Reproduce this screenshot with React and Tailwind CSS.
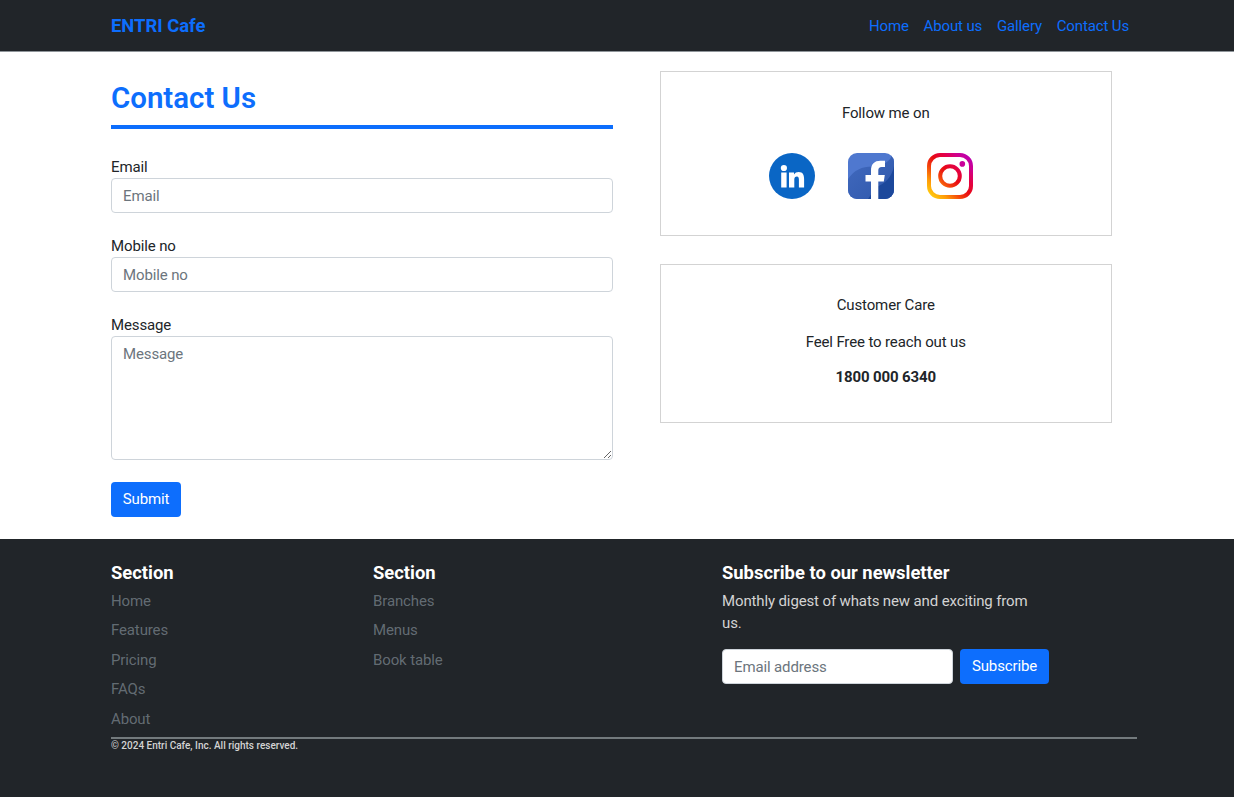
const navLinks = ['Home', 'About us', 'Gallery', 'Contact Us'];

function Field({ label, id, children }) {
  return (
    <div className="mb-[22px]">
      <label htmlFor={id} className="block h-[22px] leading-[22px]">{label}</label>
      {children}
    </div>
  );
}

function LinkedIn() {
  return (
    <svg viewBox="0 0 46 46" className="size-[46px]" aria-label="LinkedIn">
      <circle cx="23" cy="23" r="23" fill="#0a66c5" />
      <circle cx="14.900" cy="15" r="3.100" fill="#fff" />
      <path fill="#fff" d="M12.200 19.400h5.400V34.500h-5.400zM20 19.400h5v2c1-1.700 2.700-2.500 4.600-2.500 4.300 0 5.500 2.800 5.500 7V34.500h-5.200v-7.700c0-2-.3-3.300-2-3.300s-2.600 1.200-2.600 3.200V34.500H20z" />
    </svg>
  );
}

function Facebook() {
  return (
    <svg viewBox="0 0 46 46" className="size-[46px]" aria-label="Facebook">
      <defs>
        <linearGradient id="fb" x1="0" y1="0" x2="1" y2="1">
          <stop offset="0" stopColor="#426abf" />
          <stop offset="1" stopColor="#2f58ab" />
        </linearGradient>
        <clipPath id="fbClip"><rect width="46" height="46" rx="9" /></clipPath>
      </defs>
      <g clipPath="url(#fbClip)">
        <rect width="46" height="46" fill="#4f78cf" />
        <path d="M0 26C6 17 14 13.500 24 13.500C34 13 42 9 44 2L46 0V46H0Z" fill="url(#fb)" />
        <path d="M46 13C44 24 37 31 28 34L20 46H46Z" fill="#1c489b" />
        <path fill="#fff" d="M23 46V28.500H17.500V22H23V17.500C23 11 26.500 7.700 32.300 7.700H37V14H33.700C31.200 14 30.300 15.200 30.300 17.500V22H36.800L35.800 28.500H30.300V46Z" />
      </g>
    </svg>
  );
}

function Instagram() {
  return (
    <svg viewBox="0 0 46 46" className="size-[46px]" aria-label="Instagram">
      <defs>
        <linearGradient id="ig" gradientUnits="userSpaceOnUse" x1="3" y1="43" x2="43" y2="3">
          <stop offset="0" stopColor="#ffcf10" />
          <stop offset=".18" stopColor="#ff9c08" />
          <stop offset=".38" stopColor="#f23a0c" />
          <stop offset=".52" stopColor="#e80a14" />
          <stop offset=".7" stopColor="#e3004a" />
          <stop offset=".85" stopColor="#d0008c" />
          <stop offset="1" stopColor="#b900b4" />
        </linearGradient>
      </defs>
      <rect x="2" y="2" width="42" height="42" rx="11" fill="none" stroke="url(#ig)" strokeWidth="4" />
      <circle cx="23" cy="23" r="9.800" fill="none" stroke="url(#ig)" strokeWidth="4" />
      <circle cx="35.300" cy="10.900" r="2.800" fill="#c9009a" />
    </svg>
  );
}

function LinkColumn({ links }) {
  return (
    <div>
      <h5 className="mb-[6px] h-[23px] text-[18.400px] leading-[23px] font-bold tracking-normal text-white">Section</h5>
      <ul>
        {links.map((l) => (
          <li key={l} className="mb-[7.400px] h-[22px] leading-[22px] text-[#6c757d]/90">{l}</li>
        ))}
      </ul>
    </div>
  );
}

const input =
  'block h-[35px] w-full rounded-[4px] border border-[#ced4da] bg-white px-[11px] placeholder:text-[#6c757d] focus:outline-none';

export default function App() {
  return (
    <div className="min-h-[797px] overflow-hidden bg-white font-[Roboto,sans-serif] text-[15px] tracking-[-0.130px] text-[#212529]">
      <header className="flex h-[52px] items-center justify-between border-b border-[#8f959a] bg-[#212529] pr-[105px] pl-[111px] text-[#0d6efd]">
        <div className="text-[18.400px] font-bold tracking-normal">ENTRI Cafe</div>
        <nav className="flex gap-[14.720px] pt-px">
          {navLinks.map((l) => <a key={l}>{l}</a>)}
        </nav>
      </header>

      <main className="flex h-[487px] pl-[111px]">
        <form className="w-[502px] pt-[20px]">
          <h1 className="mb-[27px] h-[57px] border-b-4 border-[#0d6efd] text-[29.440px] leading-[53px] font-semibold tracking-normal text-[#0d6efd]">Contact Us</h1>
          <Field label="Email" id="email"><input id="email" placeholder="Email" className={input} /></Field>
          <Field label="Mobile no" id="mobile"><input id="mobile" placeholder="Mobile no" className={input} /></Field>
          <Field label="Message" id="message">
            <textarea id="message" placeholder="Message" className="block h-[124px] w-full resize rounded-[4px] border border-[#ced4da] bg-white px-[11px] py-[6px] leading-[22px] placeholder:text-[#6c757d]" />
          </Field>
          <button type="button" className="h-[35px] w-[70px] rounded-[4px] bg-[#0d6efd] text-white">Submit</button>
        </form>

        <div className="ml-[46.500px] w-[452.500px] pt-[19px]">
          <section className="mb-[28px] h-[165px] border border-[#d3d3d3] pt-[29px] text-center">
            <p className="leading-[24px]">Follow me on</p>
            <div className="mt-[28px] flex gap-[33px] pl-[108px]">
              <LinkedIn />
              <Facebook />
              <Instagram />
            </div>
          </section>
          <section className="h-[159px] border border-[#d3d3d3] pt-[29px] text-center">
            <p className="mb-[15px] leading-[22px]">Customer Care</p>
            <p className="mb-[13px] leading-[22px]">Feel Free to reach out us</p>
            <p className="leading-[22px] font-bold">1800 000 6340</p>
          </section>
        </div>
      </main>

      <footer className="h-[258px] bg-[#212529] pt-[22px] pr-[97px] pl-[111px]">
        <div className="grid h-[176px] grid-cols-[262px_349px_327px]">
          <LinkColumn links={['Home', 'Features', 'Pricing', 'FAQs', 'About']} />
          <LinkColumn links={['Branches', 'Menus', 'Book table']} />
          <div>
            <h5 className="mb-[6px] h-[23px] text-[18.400px] leading-[23px] font-bold tracking-normal text-white">Subscribe to our newsletter</h5>
            <p className="mb-[15px] leading-[22px] text-[#d3d3d3]">Monthly digest of whats new and exciting from us.</p>
            <div className="flex gap-[7px]">
              <input placeholder="Email address" className="h-[35px] w-[231px] rounded-[4px] border border-[#ced4da] bg-white px-[11px] placeholder:text-[#6c757d]" />
              <button className="h-[35px] w-[89px] rounded-[4px] bg-[#0d6efd] text-white">Subscribe</button>
            </div>
          </div>
        </div>
        <p className="border-t-2 border-[#737a7d] text-[10px] leading-[13px] font-medium tracking-normal text-[#d3d3d3]">© 2024 Entri Cafe, Inc. All rights reserved.</p>
      </footer>
    </div>
  );
}
